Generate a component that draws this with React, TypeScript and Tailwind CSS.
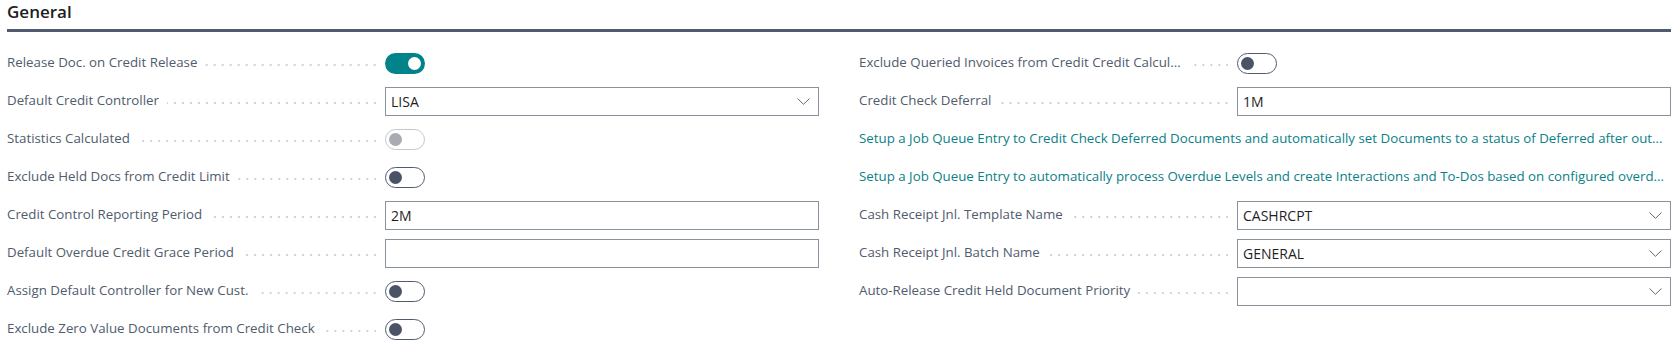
import React from 'react';

type Field =
  | { kind: 'toggle'; label: string; state: 'on' | 'off' | 'disabled' }
  | { kind: 'input'; label: string; value: string }
  | { kind: 'select'; label: string; value: string }
  | { kind: 'link'; text: string };

const leftFields: Field[] = [
  { kind: 'toggle', label: 'Release Doc. on Credit Release', state: 'on' },
  { kind: 'select', label: 'Default Credit Controller', value: 'LISA' },
  { kind: 'toggle', label: 'Statistics Calculated', state: 'disabled' },
  { kind: 'toggle', label: 'Exclude Held Docs from Credit Limit', state: 'off' },
  { kind: 'input', label: 'Credit Control Reporting Period', value: '2M' },
  { kind: 'input', label: 'Default Overdue Credit Grace Period', value: '' },
  { kind: 'toggle', label: 'Assign Default Controller for New Cust.', state: 'off' },
  { kind: 'toggle', label: 'Exclude Zero Value Documents from Credit Check', state: 'off' },
];

const rightFields: Field[] = [
  { kind: 'toggle', label: 'Exclude Queried Invoices from Credit Credit Calcul...', state: 'off' },
  { kind: 'input', label: 'Credit Check Deferral', value: '1M' },
  {
    kind: 'link',
    text: 'Setup a Job Queue Entry to Credit Check Deferred Documents and automatically set Documents to a status of Deferred after out...',
  },
  {
    kind: 'link',
    text: 'Setup a Job Queue Entry to automatically process Overdue Levels and create Interactions and To-Dos based on configured overd...',
  },
  { kind: 'select', label: 'Cash Receipt Jnl. Template Name', value: 'CASHRCPT' },
  { kind: 'select', label: 'Cash Receipt Jnl. Batch Name', value: 'GENERAL' },
  { kind: 'select', label: 'Auto-Release Credit Held Document Priority', value: '' },
];

const Toggle: React.FC<{ state: 'on' | 'off' | 'disabled' }> = ({ state }) => {
  if (state === 'on') {
    return (
      <div className="flex h-[21px] w-[40px] items-center justify-end rounded-full bg-[#008489] pr-[4px]">
        <div className="h-[13px] w-[13px] rounded-full bg-white" />
      </div>
    );
  }
  const disabled = state === 'disabled';
  return (
    <div
      className={
        disabled
          ? 'flex h-[21px] w-[40px] items-center rounded-full border border-[#c4c7cc] bg-white pl-[3px]'
          : 'flex h-[21px] w-[40px] items-center rounded-full border border-[#505c6d] bg-white pl-[3px]'
      }
    >
      <div className={disabled ? 'h-[13px] w-[13px] rounded-full bg-[#a8abb2]' : 'h-[13px] w-[13px] rounded-full bg-[#4b5466]'} />
    </div>
  );
};

const Chevron = () => (
  <svg width="13" height="7" viewBox="0 0 13 7" className="shrink-0">
    <polyline points="0.5,0.5 6.5,6.3 12.5,0.5" fill="none" stroke="#5f6b7a" strokeWidth="1" />
  </svg>
);

const FieldRow: React.FC<{ field: Field }> = ({ field }) => {
  if (field.kind === 'link') {
    return (
      <div className="flex h-[38px] items-center overflow-hidden whitespace-nowrap text-[#0b7f87]">{field.text}</div>
    );
  }
  return (
    <div className="flex h-[38px] items-center">
      <div className="flex w-[378px] shrink-0 items-center">
        <span className="whitespace-nowrap text-[#505c6d]">{field.label}</span>
        <div className="ml-[8px] mr-[9px] mt-[4px] h-[2px] flex-1 bg-[linear-gradient(to_right,transparent_6px,#d2d2d2_6px)] bg-[length:8px_2px] bg-right bg-repeat-x" />
      </div>
      <div className="flex flex-1 items-center">
        {field.kind === 'toggle' && <Toggle state={field.state} />}
        {field.kind === 'input' && (
          <div className="flex h-[29px] w-full items-center border border-[#8a929e] bg-white pl-[5px] text-[14px] text-[#1f1f1f]">
            {field.value}
          </div>
        )}
        {field.kind === 'select' && (
          <div className="flex h-[29px] w-full items-center justify-between border border-[#8a929e] bg-white pl-[5px] pr-[8px] text-[14px] text-[#1f1f1f]">
            <span>{field.value}</span>
            <Chevron />
          </div>
        )}
      </div>
    </div>
  );
};

const App: React.FC = () => {
  return (
    <div className="min-h-screen bg-white px-[7px] font-['Open_Sans',sans-serif] text-[13.3px]">
      <h2 className="text-[17px] font-semibold leading-[24px] text-[#212121]">General</h2>
      <div className="mt-[5px] h-[3px] bg-[#505c6d]" />
      <div className="mt-[12px] grid grid-cols-2 gap-x-[40px]">
        <div className="flex flex-col">
          {leftFields.map((f, i) => (
            <FieldRow key={i} field={f} />
          ))}
        </div>
        <div className="flex flex-col">
          {rightFields.map((f, i) => (
            <FieldRow key={i} field={f} />
          ))}
        </div>
      </div>
    </div>
  );
};

export default App;
